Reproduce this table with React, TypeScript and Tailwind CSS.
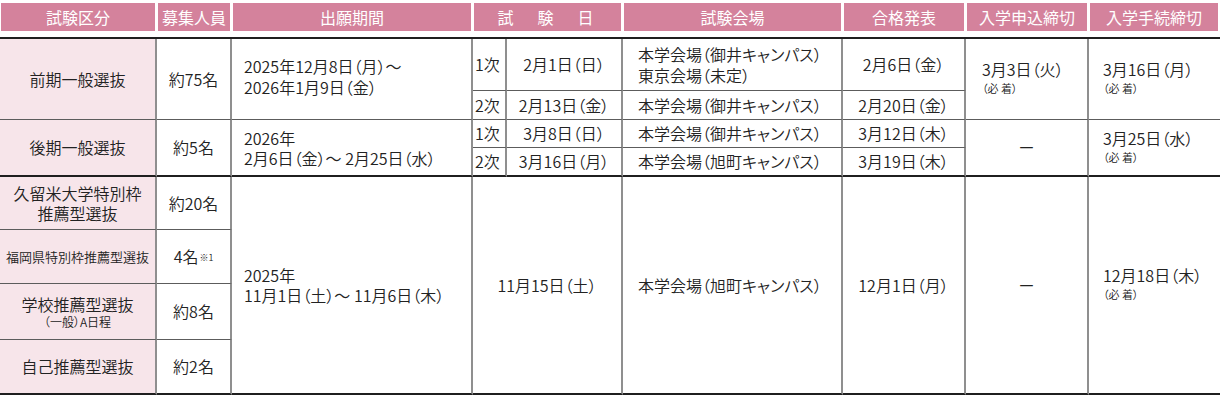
import React from "react";

const V = "border-r-2 border-r-[#8f8f8f]";
const H = "border-b border-b-[#5c5c5c]";
const HB = "border-b-2 border-b-[#1f1f1f]";
const C = "flex items-center justify-center text-center";
const PINK = "bg-[#f7e5ea]";

function Hd({ children }: { children: React.ReactNode }) {
  return (
    <div className="ml-[1px] mr-[2px] h-[28px] bg-[#d4829c] text-white flex items-center justify-center text-[16px] leading-none font-normal">
      {children}
    </div>
  );
}

function Due({ main }: { main: string }) {
  return (
    <div className="flex flex-col items-start pb-[4px]">
      <span className="text-[16px] leading-[21px]">{main}</span>
      <span className="text-[11px] leading-[13px] mt-[2px]">（必 着）</span>
    </div>
  );
}

export default function App() {
  return (
    <div className="w-[1220px] h-[404px] bg-white text-[#222] font-['Noto_Sans_CJK_JP','Noto_Sans',sans-serif] font-[350] [font-feature-settings:'palt'] text-[16px] leading-[21px]">
      <div className="pt-[3px] mb-[6px] grid grid-cols-[157px_75px_241px_150px_220px_123px_123px_131px]">
        <Hd>試験区分</Hd>
        <Hd>募集人員</Hd>
        <Hd>出願期間</Hd>
        <Hd>
          <span className="tracking-[4px]">試　験　日</span>
        </Hd>
        <Hd>試験会場</Hd>
        <Hd>合格発表</Hd>
        <Hd>入学申込締切</Hd>
        <Hd>入学手続締切</Hd>
      </div>

      <div className="border-t-2 border-t-[#1f1f1f] grid grid-cols-[157px_75px_241px_34px_116px_220px_123px_123px_131px] grid-rows-[52px_29px_28px_29px_53px_54px_56px_55px]">
        {/* 前期一般選抜 */}
        <div className={`col-start-1 row-start-1 row-span-2 ${PINK} ${V} ${H} ${C}`}>前期一般選抜</div>
        <div className={`col-start-2 row-start-1 row-span-2 ${V} ${H} ${C}`}>約75名</div>
        <div className={`col-start-3 row-start-1 row-span-2 ${V} ${H} flex flex-col justify-center pl-[12px] pb-[4px]`}>
          <span>2025年12月8日（月）～</span>
          <span>2026年1月9日（金）</span>
        </div>
        <div className={`col-start-4 row-start-1 ${V} ${H} flex items-center pl-[2px]`}>1次</div>
        <div className={`col-start-5 row-start-1 ${V} ${H} ${C}`}>2月1日（日）</div>
        <div className={`col-start-6 row-start-1 ${V} ${H} flex flex-col justify-center pl-[15px]`}>
          <span>本学会場（御井キャンパス）</span>
          <span>東京会場（未定）</span>
        </div>
        <div className={`col-start-7 row-start-1 ${V} ${H} ${C}`}>2月6日（金）</div>
        <div className={`col-start-8 row-start-1 row-span-2 ${V} ${H} flex items-center pl-[16px]`}>
          <Due main="3月3日（火）" />
        </div>
        <div className={`col-start-9 row-start-1 row-span-2 ${H} flex items-center pl-[14px]`}>
          <Due main="3月16日（月）" />
        </div>

        <div className={`col-start-4 row-start-2 ${V} ${H} flex items-center pl-[2px]`}>2次</div>
        <div className={`col-start-5 row-start-2 ${V} ${H} ${C}`}>2月13日（金）</div>
        <div className={`col-start-6 row-start-2 ${V} ${H} flex items-center pl-[15px]`}>本学会場（御井キャンパス）</div>
        <div className={`col-start-7 row-start-2 ${V} ${H} ${C}`}>2月20日（金）</div>

        {/* 後期一般選抜 */}
        <div className={`col-start-1 row-start-3 row-span-2 ${PINK} ${V} ${HB} ${C}`}>後期一般選抜</div>
        <div className={`col-start-2 row-start-3 row-span-2 ${V} ${HB} ${C}`}>約5名</div>
        <div className={`col-start-3 row-start-3 row-span-2 ${V} ${HB} flex flex-col justify-center pl-[12px] leading-[20px]`}>
          <span>2026年</span>
          <span>2月6日（金）～ 2月25日（水）</span>
        </div>
        <div className={`col-start-4 row-start-3 ${V} ${H} flex items-center pl-[2px]`}>1次</div>
        <div className={`col-start-5 row-start-3 ${V} ${H} ${C}`}>3月8日（日）</div>
        <div className={`col-start-6 row-start-3 ${V} ${H} flex items-center pl-[15px]`}>本学会場（御井キャンパス）</div>
        <div className={`col-start-7 row-start-3 ${V} ${H} ${C}`}>3月12日（木）</div>
        <div className={`col-start-8 row-start-3 row-span-2 ${V} ${HB} ${C}`}>ー</div>
        <div className={`col-start-9 row-start-3 row-span-2 ${HB} flex items-center pl-[14px]`}>
          <Due main="3月25日（水）" />
        </div>

        <div className={`col-start-4 row-start-4 ${V} ${HB} flex items-center pl-[2px]`}>2次</div>
        <div className={`col-start-5 row-start-4 ${V} ${HB} ${C}`}>3月16日（月）</div>
        <div className={`col-start-6 row-start-4 ${V} ${HB} flex items-center pl-[15px]`}>本学会場（旭町キャンパス）</div>
        <div className={`col-start-7 row-start-4 ${V} ${HB} ${C}`}>3月19日（木）</div>

        {/* 推薦 */}
        <div className={`col-start-1 row-start-5 ${PINK} ${V} ${H} ${C} flex-col leading-[20px]`}>
          <span>久留米大学特別枠</span>
          <span>推薦型選抜</span>
        </div>
        <div className={`col-start-2 row-start-5 ${V} ${H} ${C}`}>約20名</div>

        <div className={`col-start-1 row-start-6 ${PINK} ${V} ${H} ${C} text-[13px]`}>福岡県特別枠推薦型選抜</div>
        <div className={`col-start-2 row-start-6 ${V} ${H} ${C}`}>
          <span>
            4名<sup className="text-[9px] relative -top-[2px] ml-[1px]">※1</sup>
          </span>
        </div>

        <div className={`col-start-1 row-start-7 ${PINK} ${V} ${H} ${C} flex-col`}>
          <span className="leading-[20px]">学校推薦型選抜</span>
          <span className="text-[12px] leading-[15px]">（一般）A日程</span>
        </div>
        <div className={`col-start-2 row-start-7 ${V} ${H} ${C}`}>約8名</div>

        <div className={`col-start-1 row-start-8 ${PINK} ${V} ${HB} ${C}`}>自己推薦型選抜</div>
        <div className={`col-start-2 row-start-8 ${V} ${HB} ${C}`}>約2名</div>

        <div className={`col-start-3 row-start-5 row-span-4 ${V} ${HB} flex flex-col justify-center pl-[12px] leading-[20px]`}>
          <span>2025年</span>
          <span>11月1日（土）～ 11月6日（木）</span>
        </div>
        <div className={`col-start-4 col-span-2 row-start-5 row-span-4 ${V} ${HB} ${C}`}>11月15日（土）</div>
        <div className={`col-start-6 row-start-5 row-span-4 ${V} ${HB} flex items-center pl-[15px]`}>本学会場（旭町キャンパス）</div>
        <div className={`col-start-7 row-start-5 row-span-4 ${V} ${HB} ${C}`}>12月1日（月）</div>
        <div className={`col-start-8 row-start-5 row-span-4 ${V} ${HB} ${C}`}>ー</div>
        <div className={`col-start-9 row-start-5 row-span-4 ${HB} flex items-center pl-[14px]`}>
          <Due main="12月18日（木）" />
        </div>
      </div>
    </div>
  );
}
